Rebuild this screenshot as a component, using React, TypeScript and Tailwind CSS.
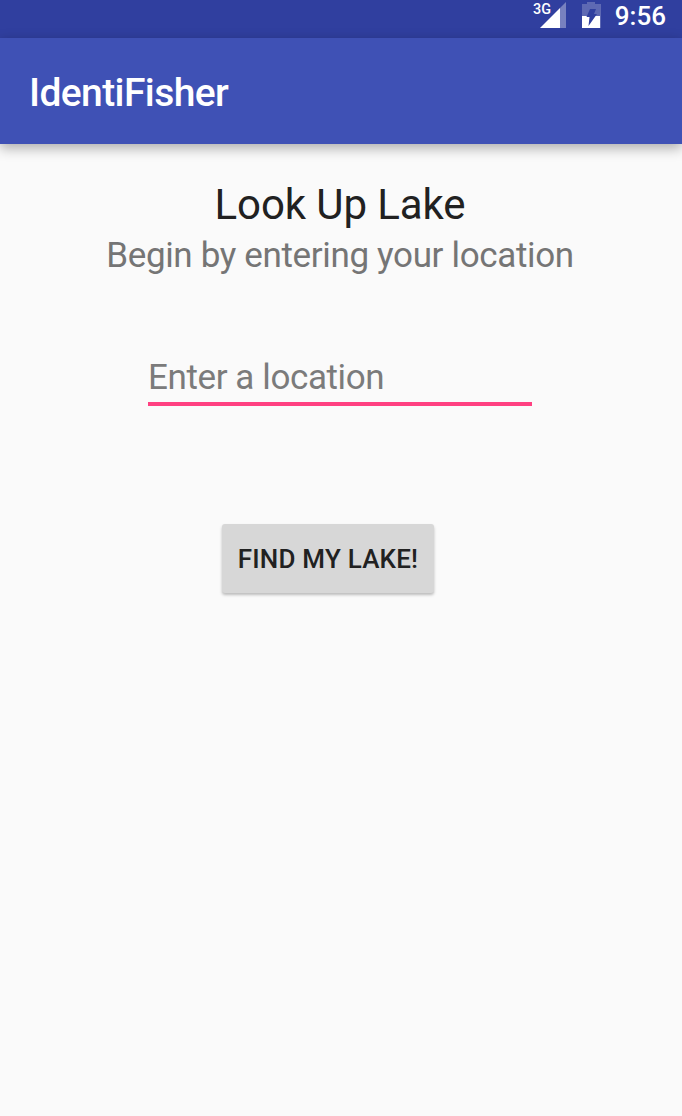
export default function App() {
  return (
    <div className="flex h-[1116px] w-[682px] flex-col items-center overflow-hidden bg-[#fafafa] font-['Roboto',sans-serif]">
      <div className="flex h-[38px] w-full shrink-0 items-start justify-end bg-[#303f9f] pr-4 text-white">
        <svg className="mr-4 h-[38px] w-[34px] shrink-0" viewBox="532 0 34 38">
          <path d="M566 2V28H560V8Z" fill="#7881bf" />
          <path d="M560 8V28H540Z" fill="#fff" />
          <text x="533" y="13.5" fontSize="15.5" fontWeight="500" textLength="18" lengthAdjust="spacingAndGlyphs" fill="#fff">3G</text>
        </svg>
        <svg className="mr-[13px] h-[38px] w-5 shrink-0" viewBox="582 0 20 38">
          <path d="M587 2h8v2h6v24h-19V4h5z" fill="#5e69b3" />
          <path d="M582 16h18v12h-18z" fill="#fff" />
          <path d="M590 9h6l-2 5h3l-8.500 12 1-9h-3z" fill="#303f9f" />
        </svg>
        <span className="text-[26px] leading-[32px] font-medium">9:56</span>
      </div>
      <header className="z-10 flex h-[106px] w-full shrink-0 items-center bg-[#3f51b5] pt-[3px] pl-[29px] shadow-[0_4px_12px_rgba(0,0,0,0.32)]">
        <h1 className="text-[39px] leading-[44px] font-medium tracking-[-0.6px] text-white">IdentiFisher</h1>
      </header>
      <h2 className="mt-9 mr-0.5 text-[42px] leading-[50px] tracking-[-0.1px] text-[#212121]">Look Up Lake</h2>
      <p className="mr-0.5 text-[35px] leading-[52px] tracking-[-0.35px] text-[#757575]">Begin by entering your location</p>
      <div className="mt-[73px] mr-0.5 h-[51px] w-[384px] border-b-4 border-[#ff4081] text-[35px] leading-[46px] tracking-[-0.4px] text-[#7b7b7b]">Enter a location</div>
      <button className="mt-[118px] mr-[26px] h-[69px] w-[212px] rounded-[3px] bg-[#d7d7d7] pt-0.5 text-[26px] font-medium tracking-[0.2px] text-[#212121] shadow-[0_2px_3px_rgba(0,0,0,0.25)]">FIND MY LAKE!</button>
    </div>
  );
}
